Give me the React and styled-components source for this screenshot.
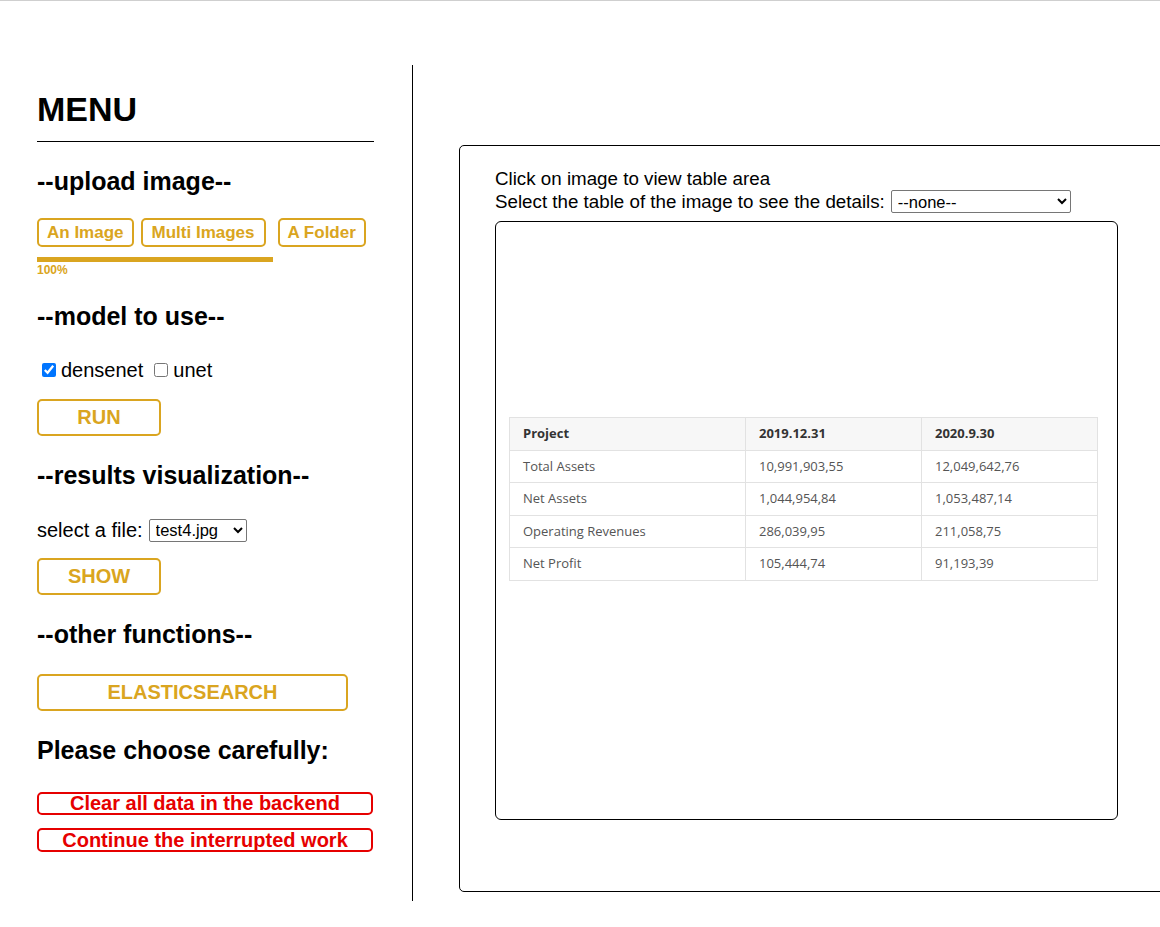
import React from 'react';
import styled, { createGlobalStyle } from 'styled-components';

const GOLD = '#daa520';
const RED = '#e60000';

const GlobalStyle = createGlobalStyle`
  html, body {
    margin: 0;
    padding: 0;
    overflow: hidden;
    background: #fff;
  }
  body {
    font-family: "Liberation Sans", Arial, sans-serif;
    color: #000;
  }
`;

const Page = styled.div`
  display: flex;
  align-items: flex-start;
  border-top: 1px solid #cfcfcf;
  padding-top: 64px;
  min-height: 862px;
`;

const Sidebar = styled.aside`
  display: flex;
  flex-direction: column;
  align-items: flex-start;
  flex-shrink: 0;
  width: 337px;
  height: 836px;
  box-sizing: border-box;
  padding: 24px 0 0 0;
  margin-left: 37px;
  margin-right: 39px;
  position: relative;
  &::after {
    content: '';
    position: absolute;
    top: 0;
    right: -39px;
    width: 1px;
    height: 100%;
    background: #000;
  }
`;

const Title = styled.h1`
  margin: 0;
  font-size: 34px;
  line-height: 40px;
  font-weight: bold;
`;

const Rule = styled.div`
  width: 100%;
  height: 1px;
  background: #000;
  margin-top: 12px;
`;

const Heading = styled.h2`
  margin: ${(p) => p.$top || 24}px 0 0 0;
  font-size: 25px;
  line-height: 30px;
  font-weight: bold;
`;

const UploadRow = styled.div`
  display: flex;
  margin-top: 22px;
`;

const SmallButton = styled.button`
  height: 29px;
  box-sizing: border-box;
  padding: 0 ${(p) => p.$pad || 8}px;
  margin-left: ${(p) => p.$gap || 0}px;
  border: 2px solid ${GOLD};
  border-radius: 5px;
  background: #fff;
  color: ${GOLD};
  font-family: "Liberation Sans", Arial, sans-serif;
  font-size: 17px;
  font-weight: bold;
  line-height: 25px;
  cursor: pointer;
`;

const Progress = styled.div`
  width: 236px;
  height: 5px;
  margin-top: 10px;
  background: ${GOLD};
`;

const Percent = styled.div`
  margin-top: 1px;
  font-size: 12px;
  line-height: 14px;
  font-weight: bold;
  color: ${GOLD};
`;

const CheckRow = styled.div`
  display: flex;
  align-items: center;
  height: 24px;
  margin-top: 27px;
  font-size: 20px;
`;

const Check = styled.input`
  width: 14px;
  height: 14px;
  margin: 0 5px 0 ${(p) => p.$left}px;
`;

const ActionButton = styled.button`
  width: ${(p) => p.$width}px;
  height: 37px;
  box-sizing: border-box;
  margin-top: ${(p) => p.$top}px;
  border: 2px solid ${GOLD};
  border-radius: 5px;
  background: #fff;
  color: ${GOLD};
  font-family: "Liberation Sans", Arial, sans-serif;
  font-size: 20px;
  font-weight: bold;
  cursor: pointer;
`;

const DangerButton = styled.button`
  width: 336px;
  height: ${(p) => p.$height}px;
  box-sizing: border-box;
  margin-top: ${(p) => p.$top}px;
  padding: 0;
  border: 2px solid ${RED};
  border-radius: 5px;
  background: #fff;
  color: ${RED};
  font-family: "Liberation Sans", Arial, sans-serif;
  font-size: 20px;
  font-weight: bold;
  line-height: 19px;
  cursor: pointer;
`;

const FileRow = styled.div`
  display: flex;
  align-items: center;
  height: 24px;
  margin-top: 28px;
  font-size: 20px;
`;

const Select = styled.select`
  height: 23px;
  width: ${(p) => p.$width}px;
  margin-left: 6px;
  padding: 0 2px;
  font-family: "Liberation Sans", Arial, sans-serif;
  font-size: 16.5px;
  color: #000;
  background: #fff;
  border: 1px solid #767676;
  border-radius: 2px;
`;

const Main = styled.main`
  padding: 80px 0 0 46px;
`;

const Panel = styled.section`
  width: 720px;
  height: 747px;
  box-sizing: border-box;
  border: 1px solid #000;
  border-radius: 5px;
  padding: 21px 0 0 35px;
  font-size: 18.75px;
  line-height: 23px;
`;

const Line = styled.div`
  display: flex;
  align-items: center;
  height: 23px;
`;

const ImageBox = styled.div`
  width: 623px;
  height: 599px;
  margin-top: 8px;
  border: 1px solid #000;
  border-radius: 6px;
  padding: 195px 0 0 13px;
  box-sizing: border-box;
`;

const Table = styled.table`
  width: 588px;
  table-layout: fixed;
  border-collapse: collapse;
  font-family: "Open Sans", sans-serif;
  font-size: 13px;
  color: #555;
  border: 1px solid #e2e2e2;
`;

const Cell = styled.td`
  height: 32.5px;
  padding: 0 13px;
  box-sizing: border-box;
  border: 1px solid #e2e2e2;
  text-align: left;
  width: ${(p) => (p.$w ? `${p.$w}px` : 'auto')};
`;

const HeadCell = styled(Cell).attrs({ as: 'th' })`
  background: #f7f7f7;
  color: #333;
  font-weight: bold;
`;

const rows = [
  ['Total Assets', '10,991,903,55', '12,049,642,76'],
  ['Net Assets', '1,044,954,84', '1,053,487,14'],
  ['Operating Revenues', '286,039,95', '211,058,75'],
  ['Net Profit', '105,444,74', '91,193,39'],
];

export default function App() {
  return (
    <>
      <GlobalStyle />
      <Page>
        <Sidebar>
          <Title>MENU</Title>
          <Rule />
          <Heading>--upload image--</Heading>
          <UploadRow>
            <SmallButton>An Image</SmallButton>
            <SmallButton $gap={7} $pad={9}>Multi Images</SmallButton>
            <SmallButton $gap={12}>A Folder</SmallButton>
          </UploadRow>
          <Progress />
          <Percent>100%</Percent>
          <Heading>--model to use--</Heading>
          <CheckRow>
            <Check type="checkbox" defaultChecked $left={5} />
            densenet
            <Check type="checkbox" $left={11} />
            unet
          </CheckRow>
          <ActionButton $width={124} $top={17}>RUN</ActionButton>
          <Heading>--results visualization--</Heading>
          <FileRow>
            select a file:
            <Select $width={98} defaultValue="test4.jpg">
              <option>test4.jpg</option>
            </Select>
          </FileRow>
          <ActionButton $width={124} $top={16}>SHOW</ActionButton>
          <Heading>--other functions--</Heading>
          <ActionButton $width={311} $top={25}>ELASTICSEARCH</ActionButton>
          <Heading>Please choose carefully:</Heading>
          <DangerButton $top={27} $height={23}>Clear all data in the backend</DangerButton>
          <DangerButton $top={13} $height={24}>Continue the interrupted work</DangerButton>
        </Sidebar>
        <Main>
          <Panel>
            <Line>Click on image to view table area</Line>
            <Line>
              Select the table of the image to see the details:
              <Select $width={180} defaultValue="none">
                <option value="none">--none--</option>
              </Select>
            </Line>
            <ImageBox>
              <Table>
                <thead>
                  <tr>
                    <HeadCell $w={236}>Project</HeadCell>
                    <HeadCell $w={176}>2019.12.31</HeadCell>
                    <HeadCell $w={176}>2020.9.30</HeadCell>
                  </tr>
                </thead>
                <tbody>
                  {rows.map((r) => (
                    <tr key={r[0]}>
                      {r.map((c, i) => (
                        <Cell key={i}>{c}</Cell>
                      ))}
                    </tr>
                  ))}
                </tbody>
              </Table>
            </ImageBox>
          </Panel>
        </Main>
      </Page>
    </>
  );
}
